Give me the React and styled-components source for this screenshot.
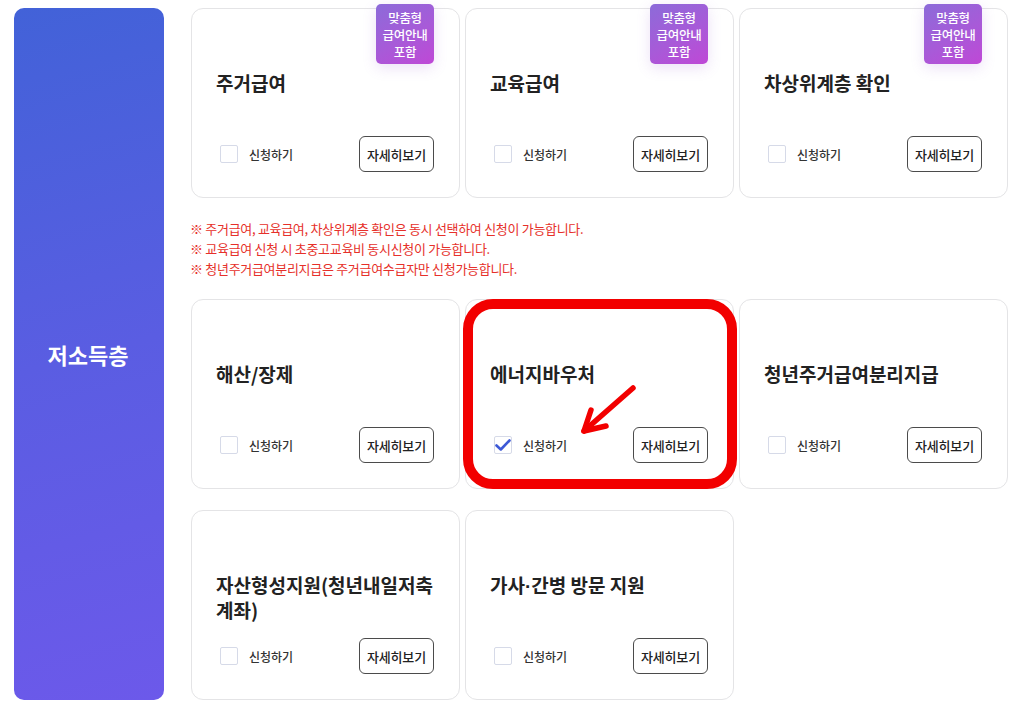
import React from "react";
import styled, { createGlobalStyle } from "styled-components";

const Global = createGlobalStyle`
  html, body { margin: 0; padding: 0; background: #fff; }
  body { font-family: "Noto Sans CJK KR", "Noto Sans", sans-serif; color: #222; }
  * { box-sizing: border-box; }
`;

const Page = styled.div`
  display: flex;
  align-items: stretch;
  padding: 8px 16px 11px 14px;
  gap: 27px;
`;

const Side = styled.div`
  width: 150px;
  flex: none;
  border-radius: 10px;
  background: linear-gradient(165deg, #4262d8 0%, #5a5de2 50%, #6c59ea 100%);
  display: flex;
  align-items: center;
  justify-content: center;
  color: #fff;
  font-size: 22px;
  font-weight: 700;
  padding-right: 2px;
`;

const Main = styled.div`
  display: flex;
  flex-direction: column;
  width: 817px;
`;

const Grid = styled.div`
  display: grid;
  grid-template-columns: repeat(3, 269px);
  column-gap: 5px;
  row-gap: 21px;
`;

const Card = styled.div`
  position: relative;
  height: 190px;
  border: 1px solid #e4e4e6;
  border-radius: 12px;
  background: #fff;
  display: flex;
  flex-direction: column;
  padding: 48px 22px 25px 24px;
`;

const Title = styled.h3`
  margin: 13px 0 0;
  font-size: 19px;
  line-height: 25px;
  font-weight: 700;
  color: #222;
  letter-spacing: 0;
`;

const Dot = styled.span`
  font-family: "Liberation Sans", "Noto Sans", sans-serif;
  font-weight: 700;
`;

const Footer = styled.div`
  margin-top: auto;
  display: flex;
  align-items: center;
  justify-content: space-between;
  padding-left: 4px;
  padding-right: 3px;
`;

const Check = styled.label`
  display: flex;
  align-items: center;
  gap: 11px;
  font-size: 12px;
  font-weight: 500;
  color: #333;
`;

const Box = styled.span`
  width: 18px;
  height: 18px;
  border: 1px solid #d6dae8;
  border-radius: 2px;
  display: flex;
  align-items: center;
  justify-content: center;
  background: #fff;
`;

const DetailBtn = styled.button`
  width: 75px;
  height: 36px;
  border: 1px solid #4b4b4b;
  border-radius: 6px;
  background: #fff;
  font-family: inherit;
  font-size: 13px;
  font-weight: 500;
  color: #222;
  padding: 0;
  letter-spacing: -0.2px;
`;

const Badge = styled.div`
  position: absolute;
  top: -5px;
  right: 25px;
  width: 58px;
  height: 60px;
  border-radius: 5px;
  background: linear-gradient(150deg, #8c6bd9 0%, #a85ad8 55%, #bf48d6 100%);
  box-shadow: 0 4px 14px rgba(150, 90, 210, 0.18);
  color: #fff;
  font-size: 12.5px;
  font-weight: 500;
  line-height: 17px;
  text-align: center;
  display: flex;
  align-items: center;
  justify-content: center;
  padding-top: 1px;
  letter-spacing: -0.3px;
`;

const Notes = styled.div`
  padding: 21px 0 20px;
  margin-left: -1px;
  font-size: 13px;
  line-height: 20px;
  color: #e6302a;
  font-weight: 400;
  letter-spacing: -0.3px;
`;

const Frame = styled.div`
  position: absolute;
  left: -3px;
  right: -4px;
  top: -1px;
  bottom: -1px;
  border: 10px solid #f20000;
  border-radius: 30px;
  pointer-events: none;
`;

const Arrow = styled.svg`
  position: absolute;
  left: 112px;
  top: 82px;
  overflow: visible;
`;

const Tick = () => (
  <svg width="16" height="13" viewBox="0 0 16 13">
    <path d="M1.5 6.5 L5.8 10.5 L14.5 1.5" fill="none" stroke="#3d59d6" strokeWidth="2.6" strokeLinecap="round" strokeLinejoin="round" />
  </svg>
);

const items = [
  { t: "주거급여", badge: true },
  { t: "교육급여", badge: true },
  { t: "차상위계층 확인", badge: true },
];
const items2 = [
  { t: "해산/장제" },
  { t: "에너지바우처", checked: true, hl: true },
  { t: "청년주거급여분리지급" },
  { t: "자산형성지원(청년내일저축계좌)" },
  {
    t: "가사·간병 방문 지원",
    node: (
      <>
        가사<Dot>·</Dot>간병 방문 지원
      </>
    ),
  },
];

const ItemCard = ({ t, node, badge, checked, hl }) => (
  <Card>
    {badge && (
      <Badge>
        맞춤형
        <br />
        급여안내
        <br />
        포함
      </Badge>
    )}
    <Title>{node || t}</Title>
    <Footer>
      <Check>
        <Box>{checked && <Tick />}</Box>
        신청하기
      </Check>
      <DetailBtn>자세히보기</DetailBtn>
    </Footer>
    {hl && (
      <>
        <Frame />
        <Arrow width="60" height="52" viewBox="0 0 60 52">
          <g fill="none" stroke="#f20000" strokeWidth="5.5" strokeLinecap="round" strokeLinejoin="round">
            <path d="M55 6 L6 49" />
            <path d="M13 28 L6 49 L28 44" />
          </g>
        </Arrow>
      </>
    )}
  </Card>
);

export default function App() {
  return (
    <>
      <Global />
      <Page>
        <Side>저소득층</Side>
        <Main>
          <Grid>
            {items.map((it) => (
              <ItemCard key={it.t} {...it} />
            ))}
          </Grid>
          <Notes>
            <div>※ 주거급여, 교육급여, 차상위계층 확인은 동시 선택하여 신청이 가능합니다.</div>
            <div>※ 교육급여 신청 시 초중고교육비 동시신청이 가능합니다.</div>
            <div>※ 청년주거급여분리지급은 주거급여수급자만 신청가능합니다.</div>
          </Notes>
          <Grid>
            {items2.map((it) => (
              <ItemCard key={it.t} {...it} />
            ))}
          </Grid>
        </Main>
      </Page>
    </>
  );
}
